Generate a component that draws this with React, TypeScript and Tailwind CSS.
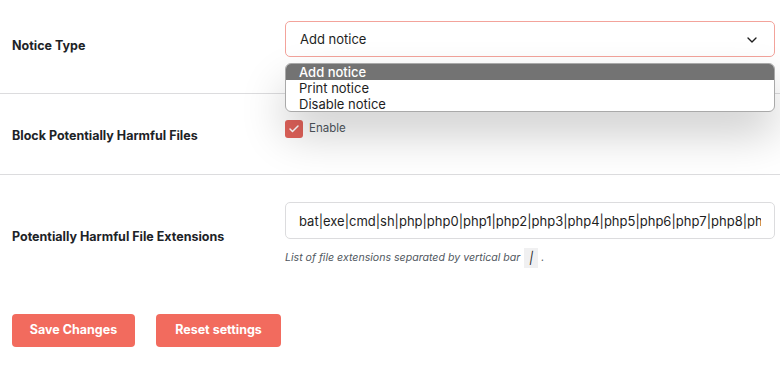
import { Check, ChevronDown } from "lucide-react";

const font = { fontFamily: "Inter, 'Noto Sans', sans-serif" };

const extensions =
  "bat|exe|cmd|sh|php|php0|php1|php2|php3|php4|php5|php6|php7|php8|phtml|pht|pl|py|jsp|asp|htm|html|shtml|cgi|js";

function Row({
  label,
  height,
  children,
  border = true,
}: {
  label: string;
  height: string;
  children: React.ReactNode;
  border?: boolean;
}) {
  return (
    <div className={`flex ${height} ${border ? "border-b border-[#dcdcde]" : ""}`}>
      <div className="w-[285px] shrink-0 flex items-center pl-3 pt-[4px] text-[12.5px] font-bold text-[#1d2327]">
        {label}
      </div>
      <div className="flex-1 pr-[5px] pt-[27px]">{children}</div>
    </div>
  );
}

export default function App() {
  const options = ["Add notice", "Print notice", "Disable notice"];

  return (
    <div className="w-[780px] h-[368px] bg-white overflow-hidden relative" style={font}>
      <div className="flex h-[94px] border-b border-[#dcdcde]">
        <div className="w-[285px] shrink-0 flex items-center pl-3 text-[12.5px] font-bold text-[#1d2327]">
          Notice Type
        </div>
        <div className="flex-1 pr-[5px] pt-[21px]">
          <div className="h-[36px] rounded-[5px] border border-[#f3a39b] flex items-center justify-between pl-[14px] pr-[14px] pt-[1px] text-[13px] text-[#1e1e1e]">
            <span>Add notice</span>
            <ChevronDown size={16} strokeWidth={2} className="text-[#1e1e1e]" />
          </div>
        </div>
      </div>

      <Row label="Block Potentially Harmful Files" height="h-[81px]">
        <label className="flex items-center gap-[6px] -mt-[1px]">
          <span className="w-[18px] h-[18px] rounded-[3px] bg-[#e0625a] flex items-center justify-center">
            <Check size={12} strokeWidth={3} className="text-white" />
          </span>
          <span className="text-[11.5px] text-[#50575e]">Enable</span>
        </label>
      </Row>

      <Row label="Potentially Harmful File Extensions" height="h-[120px]" border={false}>
        <input
          readOnly
          value={extensions}
          className="w-full h-[37px] rounded-[5px] border border-[#dcdcde] px-[13px] text-[13px] text-[#1e1e1e] outline-none"
          style={font}
        />
        <p className="mt-[9px] text-[10.6px] italic text-[#50575e] flex items-center">
          List of file extensions separated by vertical bar
          <code className="ml-[4px] mr-[3px] px-[5px] py-[1px] bg-[#f0f0f1] text-[12px] text-[#1e1e1e]" style={font}>
            <i>|</i>
          </code>
          .
        </p>
      </Row>

      <div className="flex gap-[21px] pl-3 pt-[19px]">
        <button className="w-[123px] h-[33px] rounded-[4px] bg-[#f26b5e] text-white text-[12.5px] font-bold">
          Save Changes
        </button>
        <button className="w-[125px] h-[33px] rounded-[4px] bg-[#f26b5e] text-white text-[12.5px] font-bold">
          Reset settings
        </button>
      </div>

      <div className="absolute left-[285px] top-[63px] w-[490px] h-[49px] rounded-[6px] border border-[#a9a9a9] bg-white overflow-hidden shadow-[0_22px_45px_rgba(0,0,0,0.2)] text-[13px] leading-[16px] text-[#1e1e1e]">
        {options.map((o, i) => (
          <div
            key={o}
            className={`pl-[13px] h-[16px] ${i === 0 ? "bg-[#737373] text-white font-medium" : ""}`}
          >
            {o}
          </div>
        ))}
      </div>
    </div>
  );
}
